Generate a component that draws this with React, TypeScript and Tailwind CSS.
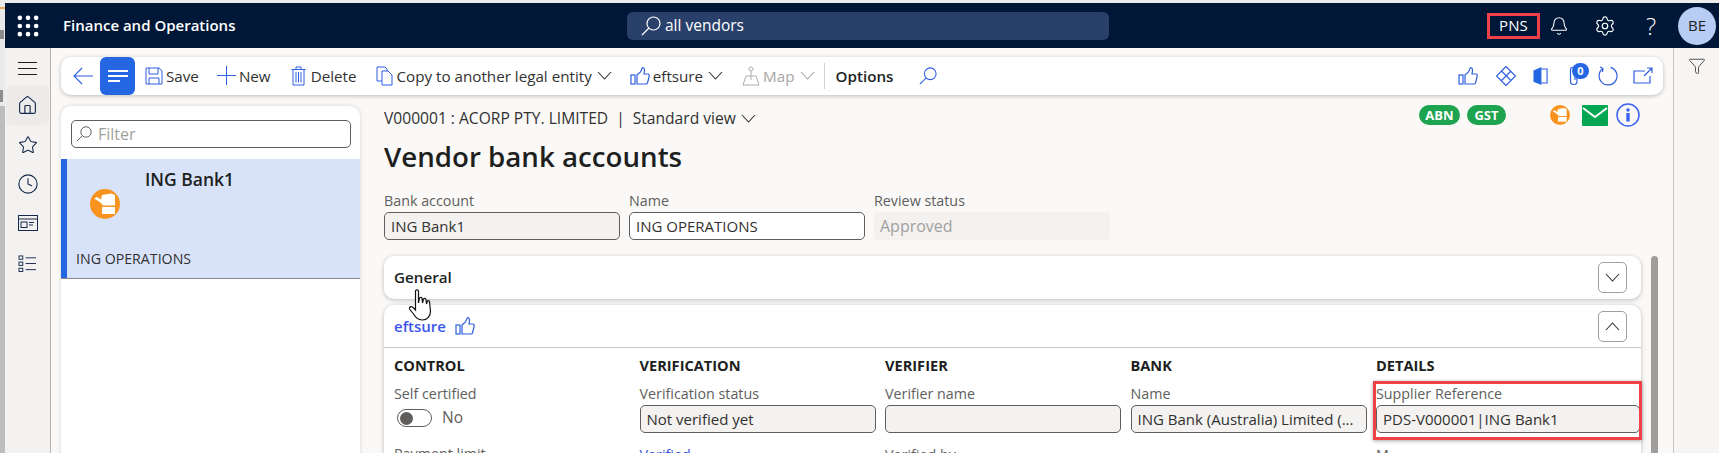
import React from 'react';
import { Bell, Settings, Home, Star, Clock, Filter, Grip } from 'lucide-react';

const font = "font-['Open_Sans','Noto_Sans',sans-serif]";

const Thumb = ({ className = 'w-5 h-5' }: { className?: string }) => (
  <svg viewBox="0 0 20 20" fill="none" stroke="#2f5fe0" strokeWidth="1.2" className={className}>
    <rect x="1" y="9" width="4" height="9" />
    <path d="M7 9 L10.5 6 L12.5 1.5 C14.5 1.5 15 3.5 14 8 L18 8 C19.2 8 19.4 9.5 19 11 L17.5 17 C17.2 18 16.5 18 15.5 18 L7 18 Z" />
  </svg>
);

const Hand = ({ className }: { className: string }) => (
  <svg viewBox="0 0 30 30" className={className}>
    <circle cx="15" cy="15" r="15" fill="#f7931e" />
    <path d="M4 9.5 L7 8 L11 10.5 L12 6 L21 4.5 L25 6 L25 16.5 L13 16.5 L10.5 13.5 Z" fill="#fff" />
    <rect x="12" y="18" width="13" height="7" fill="#fff" />
  </svg>
);

const Lens = ({ className, stroke = 'currentColor' }: { className: string; stroke?: string }) => (
  <svg viewBox="0 0 20 20" fill="none" stroke={stroke} strokeWidth="1.2" className={className}>
    <circle cx="12.5" cy="7.5" r="6.5" />
    <path d="M8 12 L1 19" />
  </svg>
);

const Chev = ({ up, className = 'w-[15px] h-[9px]' }: { up?: boolean; className?: string }) => (
  <svg viewBox="0 0 15 9" fill="none" stroke="currentColor" strokeWidth="1.1" className={className}>
    <path d={up ? 'M1 8 L7.5 1 L14 8' : 'M1 1 L7.5 8 L14 1'} />
  </svg>
);

const ToolButton = ({ icon, label, disabled, chevron, gap = 'gap-[3px]' }: { icon: React.ReactNode; label: string; disabled?: boolean; chevron?: boolean; gap?: string }) => (
  <div className={`flex items-center ${gap} text-[15.2px] whitespace-nowrap ${disabled ? 'text-[#a8a6a4]' : 'text-[#323130]'}`}>
    {icon}
    <span>{label}</span>
    {chevron && <Chev className="ml-[2px] w-[15px] h-[9px]" />}
  </div>
);

const Field = ({ label, value, className = 'w-[236px]', tone = 'bg-[#f3f2f1]' }: { label: string; value: string; className?: string; tone?: string }) => (
  <div className={className}>
    <div className="text-[14.3px] leading-[18px] text-[#605e5c] whitespace-nowrap">{label}</div>
    <div className={`h-[28px] mt-[2px] px-[6px] flex items-center rounded-[5px] border border-[#605e5c] text-[15px] text-[#323130] whitespace-nowrap overflow-hidden ${tone}`}>{value}</div>
  </div>
);

const SideIcons = () => (
  <div className="w-[46px] shrink-0 bg-[#f3f2f1] border-r border-[#b5b3b1] flex flex-col items-center pt-[14px] text-[#16294d]">
    <svg viewBox="0 0 19 13" fill="none" stroke="#201f1e" className="w-[19px] h-[13px]">
      <path d="M0 0.5 H19 M0 6.5 H19 M0 12.5 H19" />
    </svg>
    <div className="mt-[10px] w-[43px] h-[40px] rounded-[6px] bg-[#edebe9] flex items-center justify-center">
      <Home className="w-[21px] h-[21px]" strokeWidth={1.3} />
    </div>
    <Star className="w-[20px] h-[20px] mt-[10px]" strokeWidth={1.3} />
    <Clock className="w-[22px] h-[22px] mt-[18px]" strokeWidth={1.2} />
    <svg viewBox="0 0 20 16" fill="none" stroke="currentColor" className="w-[20px] h-[16px] mt-[20px]">
      <rect x="0.5" y="0.5" width="19" height="15" />
      <path d="M0.5 4 H19.5" />
      <rect x="3" y="7" width="6" height="5.5" />
      <path d="M11 7.5 H16 M11 10 H15" />
    </svg>
    <svg viewBox="0 0 20 18" fill="none" stroke="currentColor" className="w-[19px] h-[17px] mt-[24px]">
      <rect x="1" y="1" width="4" height="3.5" />
      <rect x="1" y="7.5" width="4" height="3.5" />
      <rect x="1" y="14" width="4" height="3.5" />
      <path d="M8 3 H19 M8 9 H19 M8 15.5 H19" />
    </svg>
  </div>
);

const CommandBar = () => (
  <div className="h-[38px] rounded-[10px] bg-white shadow-[0_1px_4px_rgba(0,0,0,0.25)] flex items-center pl-[12px] pr-[10px] relative">
    <svg viewBox="0 0 20 18" fill="none" stroke="#2f5fe0" strokeWidth="1.1" className="w-[20px] h-[18px] shrink-0">
      <path d="M9 1 L1 9 L9 17 M1 9 H20" />
    </svg>
    <div className="ml-[7px] w-[35px] h-[38px] rounded-[6px] bg-[#2566e3] flex flex-col justify-center gap-[3px] pl-[8px] shrink-0">
      <div className="w-[20px] h-[2px] bg-white" />
      <div className="w-[20px] h-[2px] bg-white" />
      <div className="w-[12px] h-[2px] bg-white" />
    </div>
    <div className="ml-[10px] flex items-center">
      <ToolButton
        label="Save"
        icon={
          <svg viewBox="0 0 18 18" fill="none" stroke="#2f5fe0" className="w-[18px] h-[18px]">
            <path d="M1 1 H14 L17 4 V17 H1 Z" />
            <path d="M4 1 V7 H13 V1 M4 17 V11 H14 V17" />
          </svg>
        }
      />
      <div className="ml-[18px]">
        <ToolButton
          label="New"
          icon={
            <svg viewBox="0 0 19 19" fill="none" stroke="#2f5fe0" className="w-[19px] h-[19px]">
              <path d="M9.5 0 V19 M0 9.5 H19" />
            </svg>
          }
        />
      </div>
      <div className="ml-[20px]">
        <ToolButton
          label="Delete"
          gap="gap-[5px]"
          icon={
            <svg viewBox="0 0 15 20" fill="none" stroke="#2f5fe0" className="w-[15px] h-[20px]">
              <path d="M0.5 3.5 H14.5 M5 3.5 V1 H10 V3.5 M2 3.5 V19 H13 V3.5" />
              <path d="M5 6 V16.5 M7.5 6 V16.5 M10 6 V16.5" />
            </svg>
          }
        />
      </div>
      <div className="ml-[20px]">
        <ToolButton
          label="Copy to another legal entity"
          chevron
          icon={
            <svg viewBox="0 0 17 20" fill="none" stroke="#2f5fe0" className="w-[17px] h-[20px]">
              <path d="M1 1 H9 L11 3 V15 H1 Z" />
              <path d="M6 5 H12 L16 9 V19 H6 Z" fill="#fff" />
            </svg>
          }
        />
      </div>
      <div className="ml-[18px]">
        <ToolButton label="eftsure" chevron icon={<Thumb className="w-[20px] h-[20px]" />} />
      </div>
      <div className="ml-[19px]">
        <ToolButton
          label="Map"
          disabled
          chevron
          icon={
            <svg viewBox="0 0 18 20" fill="none" stroke="#b0aeac" className="w-[18px] h-[20px]">
              <circle cx="9" cy="3" r="2" />
              <path d="M9 5 V14 M1 19 L4 10 H14 L17 19 Z" />
            </svg>
          }
        />
      </div>
    </div>
    <div className="ml-[9px] w-px h-[26px] bg-[#d2d0ce]" />
    <span className="ml-[11px] text-[15.2px] font-semibold text-[#201f1e]">Options</span>
    <Lens className="ml-[26px] w-[18px] h-[18px]" stroke="#2f5fe0" />
    <div className="ml-auto flex items-center">
      <Thumb className="w-[20px] h-[20px]" />
      <svg viewBox="0 0 20 20" fill="none" stroke="#2f5fe0" strokeWidth="1.2" className="ml-[18px] w-[20px] h-[20px]">
        <path d="M10 0.5 L19.5 10 L10 19.5 L0.5 10 Z M5.5 5 L15 14.5 M14.5 5.5 L5 15" />
      </svg>
      <svg viewBox="0 0 16 20" className="ml-[17px] w-[15px] h-[20px]">
        <path d="M0.5 4 L9 0.5 V19.5 L0.5 16 Z" fill="#2566e3" />
        <path d="M9 2.5 H15 V17.5 H9" fill="none" stroke="#2f5fe0" strokeWidth="1.2" />
      </svg>
      <div className="relative ml-[21px] w-[20px] h-[24px]">
        <svg viewBox="0 0 10 21" fill="none" stroke="#2f5fe0" strokeWidth="1.2" className="absolute left-0 top-[2px] w-[10px] h-[21px]">
          <path d="M8 5 V15.5 C8 19.5 1.5 19.5 1.5 15.5 V3.5 C1.5 0.5 6 0.5 6 3.5 V14" />
        </svg>
        <div className="absolute left-[3px] top-[-1px] w-[17px] h-[16px] rounded-full bg-[#2566e3] text-white text-[11px] font-bold flex items-center justify-center">0</div>
      </div>
      <svg viewBox="0 0 20 20" fill="none" stroke="#2f5fe0" strokeWidth="1.2" className="ml-[9px] w-[20px] h-[20px]">
        <path d="M12.5 1.3 A9 9 0 1 1 5 2.5 M5 2.5 L2 1 M5 2.5 L4.5 6" />
      </svg>
      <svg viewBox="0 0 20 18" fill="none" stroke="#2f5fe0" strokeWidth="1.2" className="ml-[15px] w-[20px] h-[18px]">
        <path d="M12 4 H1 V16 H17 V9 M11 9 L19 1 M14 1 H19 V6" />
      </svg>
    </div>
  </div>
);

const ListPanel = () => (
  <div className="w-[299px] shrink-0 rounded-t-[10px] bg-white shadow-[0_0_4px_rgba(0,0,0,0.15)] pt-[14px]">
    <div className="mx-[10px] w-[280px] h-[28px] rounded-[5px] border border-[#605e5c] flex items-center pl-[4px] gap-[6px] text-[16px] text-[#a19f9d]">
      <Lens className="w-[16px] h-[16px] text-[#605e5c]" />
      Filter
    </div>
    <div className="mt-[11px] h-[119px] bg-[#d8e3f9] border-l-[6px] border-[#2566e3] flex flex-col relative">
      <div className="pl-[78px] pt-[8px] text-[17.5px] leading-[24px] font-semibold text-[#201f1e]">ING Bank1</div>
      <Hand className="absolute left-[23px] top-[30px] w-[30px] h-[30px]" />
      <div className="mt-auto pl-[9px] pb-[9px] text-[14.2px] leading-[20px] text-[#323130]">ING OPERATIONS</div>
    </div>
    <div className="h-px bg-[#8a8886]" />
  </div>
);

const Section = ({ title, rows }: { title: string; rows: React.ReactNode }) => (
  <div className="w-[245.5px] shrink-0">
    <div className="text-[14.6px] leading-[20px] font-bold text-[#201f1e]">{title}</div>
    {rows}
  </div>
);

const Next = ({ label, blue }: { label: string; blue?: boolean }) => (
  <div className={`mt-[13px] text-[14.3px] leading-[18px] ${blue ? 'text-[#2f4fe0]' : 'text-[#605e5c]'}`}>{label}</div>
);

const DetailPane = () => (
  <div className="flex-1 min-w-0 pl-[24px]">
    <div className="flex items-center text-[15.6px] leading-[20px] text-[#323130] pt-[2px] whitespace-nowrap">
      <span>V000001 : ACORP PTY. LIMITED</span>
      <span className="mx-[8px]">|</span>
      <span>Standard view</span>
      <Chev className="ml-[5px] w-[15px] h-[9px]" />
      <div className="ml-auto flex items-center -mt-[6px] pr-[23px]">
        <span className="w-[41px] h-[20px] rounded-full bg-[#1ea34f] text-white text-[13px] font-bold flex items-center justify-center">ABN</span>
        <span className="ml-[7px] w-[39px] h-[20px] rounded-full bg-[#1ea34f] text-white text-[13px] font-bold flex items-center justify-center">GST</span>
        <Hand className="ml-[44px] w-[20px] h-[20px]" />
        <svg viewBox="0 0 26 21" className="ml-[12px] w-[26px] h-[21px]">
          <rect width="26" height="21" rx="1" fill="#00a651" />
          <path d="M1 3 L13 12 L25 3" fill="none" stroke="#fff" strokeWidth="2" />
        </svg>
        <svg viewBox="0 0 24 24" className="ml-[8px] w-[24px] h-[24px]">
          <circle cx="12" cy="12" r="11" fill="none" stroke="#3b62f0" strokeWidth="1.5" />
          <circle cx="12" cy="7" r="1.8" fill="#3b62f0" />
          <rect x="10.3" y="10" width="3.4" height="8.5" fill="#3b62f0" />
        </svg>
      </div>
    </div>
    <h1 className="mt-[10px] text-[27.7px] leading-[36px] font-semibold text-[#201f1e]">Vendor bank accounts</h1>
    <div className="mt-[18px] flex gap-[9px]">
      <Field label="Bank account" value="ING Bank1" />
      <Field label="Name" value="ING OPERATIONS" tone="bg-white" />
      <div className="w-[236px]">
        <div className="text-[14.3px] leading-[18px] text-[#605e5c]">Review status</div>
        <div className="h-[28px] mt-[2px] px-[6px] flex items-center rounded-[4px] bg-[#f3f2f1] text-[16px] text-[#a19f9d]">Approved</div>
      </div>
    </div>
    <div className="mt-[16px] pr-[22px] relative">
      <div className="h-[43px] rounded-[10px] bg-white shadow-[0_1px_4px_rgba(0,0,0,0.25)] flex items-center justify-between pl-[10px] pr-[14px]">
        <span className="text-[15.2px] font-semibold text-[#201f1e]">General</span>
        <div className="w-[29px] h-[31px] rounded-[5px] border border-[#a19f9d] flex items-center justify-center text-[#323130]">
          <Chev />
        </div>
      </div>
      <svg viewBox="0 0 24 32" className="absolute left-[24px] top-[33px] w-[25px] h-[32px] z-10">
        <path d="M7 2 C7 0.5 10 0.5 10 2 V14 L11 9 C12 8 13 8 13.5 9 L14 14 L15 10 C16 9 17 9 17.5 10.5 L18 15 L19 12 C20 11 21 12 21 13 L22 22 C22 27 19 31 14 31 C9 31 7 28 5 25 L1 20 C0.5 18 2.5 17 4 18 L7 21 Z" fill="#fff" stroke="#111" strokeWidth="1.2" />
      </svg>
      <div className="mt-[6px] rounded-t-[10px] bg-white shadow-[0_1px_4px_rgba(0,0,0,0.25)] pb-[10px]">
        <div className="h-[43px] flex items-center justify-between pl-[10px] pr-[14px] border-b border-[#c8c6c4]">
          <div className="flex items-center gap-[9px]">
            <span className="text-[15px] font-semibold text-[#3b55f0]">eftsure</span>
            <Thumb className="w-[20px] h-[20px]" />
          </div>
          <div className="w-[29px] h-[31px] rounded-[5px] border border-[#a19f9d] flex items-center justify-center text-[#323130]">
            <Chev up />
          </div>
        </div>
        <div className="pl-[10px] pt-[7px] flex">
          <Section
            title="CONTROL"
            rows={
              <>
                <div className="mt-[10px] text-[14.3px] leading-[18px] text-[#605e5c]">Self certified</div>
                <div className="mt-[1px] h-[28px] ml-[3px] flex items-center gap-[10px] text-[15.5px] text-[#605e5c]">
                  <div className="w-[35px] h-[18px] rounded-full border border-[#605e5c] flex items-center pl-[2px]">
                    <div className="w-[13px] h-[13px] rounded-full bg-[#605e5c]" />
                  </div>
                  No
                </div>
                <Next label="Payment limit" />
              </>
            }
          />
          <Section
            title="VERIFICATION"
            rows={
              <>
                <div className="mt-[10px]"><Field label="Verification status" value="Not verified yet" /></div>
                <Next label="Verified" blue />
              </>
            }
          />
          <Section
            title="VERIFIER"
            rows={
              <>
                <div className="mt-[10px]"><Field label="Verifier name" value="" /></div>
                <Next label="Verified by" />
              </>
            }
          />
          <Section
            title="BANK"
            rows={
              <>
                <div className="mt-[10px]"><Field label="Name" value="ING Bank (Australia) Limited (..." /></div>
              </>
            }
          />
          <div className="w-[264px] shrink-0 relative">
            <div className="text-[14.6px] leading-[20px] font-bold text-[#201f1e]">DETAILS</div>
            <div className="mt-[10px]"><Field label="Supplier Reference" value="PDS-V000001|ING Bank1" className="w-[264px]" /></div>
            <Next label="M" />
            <div className="absolute left-[-3px] top-[26px] w-[269px] h-[59px] border-[3px] border-[#f04048] shadow-[0_1px_4px_rgba(0,0,0,0.35)]" />
          </div>
        </div>
      </div>
      <div className="absolute right-[5px] top-0 w-[7px] h-[200px] rounded-t-full bg-[#a09e9c]" />
    </div>
  </div>
);

export default function App() {
  return (
    <div className={`w-[1719px] h-[453px] overflow-hidden bg-[#f3f2f1] flex flex-col ${font}`}>
      <div className="h-[3px] bg-[#ececec] shrink-0" />
      <div className="flex-1 min-h-0 flex">
        <div className="w-[5px] shrink-0 bg-[#e9e9e9] flex flex-col">
          <div className="mt-[4px] h-[2px] bg-[#e9a95a]" />
          <div className="mt-[21px] h-[9px] w-[4px] bg-[#8c8c8c]" />
          <div className="mt-[51px] h-[12px] w-[3px] bg-[#8c8c8c]" />
          <div className="mt-[4px] flex-1 bg-[#bdbdbd]" />
        </div>
        <div className="flex-1 min-w-0 flex flex-col">
          <header className="h-[45px] shrink-0 bg-[#001737] flex items-center text-white">
            <Grip className="ml-[9px] w-[28px] h-[28px]" strokeWidth={2} />
            <span className="ml-[21px] w-[564px] text-[15px] font-semibold">Finance and Operations</span>
            <div className="w-[482px] h-[28px] rounded-[6px] bg-[#29406b] flex items-center pl-[14px] gap-[4px] text-[15.5px]">
              <Lens className="w-[20px] h-[20px]" />
              all vendors
            </div>
            <div className="ml-auto flex items-center">
              <div className="w-[53px] h-[26px] border-[3px] border-[#f04048] flex items-center justify-center text-[15px]">PNS</div>
              <Bell className="ml-[9px] w-[20px] h-[20px]" strokeWidth={1.3} />
              <Settings className="ml-[25px] w-[22px] h-[22px]" strokeWidth={1.3} />
              <span className="ml-[30px] text-[24px] font-light leading-none">?</span>
              <div className="ml-[22px] mr-[3px] w-[38px] h-[38px] rounded-full bg-[#b7cdf4] text-[#201f1e] text-[15px] flex items-center justify-center">BE</div>
            </div>
          </header>
          <div className="flex-1 min-h-0 flex">
            <SideIcons />
            <main className="flex-1 min-w-0 bg-[#faf9f8] px-[10px] pt-[9px]">
              <CommandBar />
              <div className="mt-[11px] flex">
                <ListPanel />
                <DetailPane />
              </div>
            </main>
            <div className="w-[46px] shrink-0 bg-[#f6f5f4] border-l border-[#c8c6c4] flex justify-center pt-[9px]">
              <Filter className="w-[18px] h-[18px] text-[#323130]" strokeWidth={1.1} />
            </div>
          </div>
        </div>
      </div>
    </div>
  );
}
